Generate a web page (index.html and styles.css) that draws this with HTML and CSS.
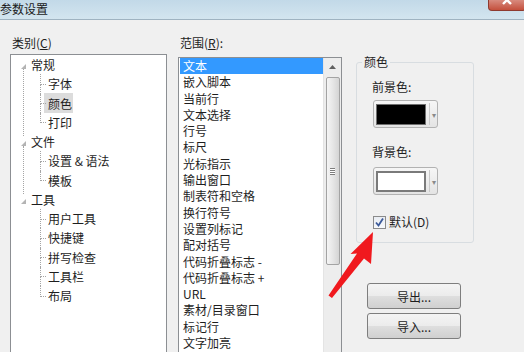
FILE: index.html
```html
<!DOCTYPE html>
<html lang="zh-CN">
<head>
    <meta charset="UTF-8">
    <title>参数设置</title>
    <link rel="stylesheet" href="styles.css">
</head>
<body>
    <div class="titlebar">
        <span class="title">参数设置</span>
        <div class="close-btn">
            <svg width="14" height="8" viewBox="0 0 14 8"><path d="M3 -4 L11 4 M11 -4 L3 4" stroke="#fff" stroke-width="2.4"/></svg>
        </div>
    </div>

    <div class="main">
        <!-- 类别 -->
        <div class="col col-left">
            <div class="label">类别(<u>C</u>)</div>
            <ul class="tree">
                <li class="node">
                    <div class="row root"><span class="twisty"></span>常规</div>
                    <ul class="children">
                        <li class="row child">字体</li>
                        <li class="row child"><span class="sel">颜色</span></li>
                        <li class="row child">打印</li>
                    </ul>
                </li>
                <li class="node">
                    <div class="row root"><span class="twisty"></span>文件</div>
                    <ul class="children">
                        <li class="row child">设置 &amp; 语法</li>
                        <li class="row child">模板</li>
                    </ul>
                </li>
                <li class="node">
                    <div class="row root"><span class="twisty"></span>工具</div>
                    <ul class="children">
                        <li class="row child">用户工具</li>
                        <li class="row child">快捷键</li>
                        <li class="row child">拼写检查</li>
                        <li class="row child">工具栏</li>
                        <li class="row child">布局</li>
                    </ul>
                </li>
            </ul>
        </div>

        <!-- 范围 -->
        <div class="col col-mid">
            <div class="label">范围(<u>R</u>):</div>
            <div class="listbox">
                <ul class="items">
                    <li class="item selected">文本</li>
                    <li class="item">嵌入脚本</li>
                    <li class="item">当前行</li>
                    <li class="item">文本选择</li>
                    <li class="item">行号</li>
                    <li class="item">标尺</li>
                    <li class="item">光标指示</li>
                    <li class="item">输出窗口</li>
                    <li class="item">制表符和空格</li>
                    <li class="item">换行符号</li>
                    <li class="item">设置列标记</li>
                    <li class="item">配对括号</li>
                    <li class="item">代码折叠标志 -</li>
                    <li class="item">代码折叠标志 +</li>
                    <li class="item">URL</li>
                    <li class="item">素材/目录窗口</li>
                    <li class="item">标记行</li>
                    <li class="item">文字加亮</li>
                </ul>
                <div class="scrollbar">
                    <div class="sb-arrow">
                        <svg width="7" height="4" viewBox="0 0 7 4"><path d="M0 4 L3.5 0 L7 4 Z" fill="#606060"/></svg>
                    </div>
                    <div class="sb-thumb"><span class="grip"></span></div>
                </div>
            </div>
        </div>

        <!-- 颜色 -->
        <div class="col col-right">
            <div class="group">
                <div class="group-title">颜色</div>
                <div class="field-label">前景色:</div>
                <div class="color-btn">
                    <span class="swatch black"></span>
                    <span class="sep"></span>
                    <span class="drop">&#9662;</span>
                </div>
                <div class="field-label second">背景色:</div>
                <div class="color-btn bg">
                    <span class="swatch white"></span>
                    <span class="sep"></span>
                    <span class="drop">&#9662;</span>
                </div>
                <div class="check-row">
                    <span class="checkbox">
                        <svg width="11" height="11" viewBox="0 0 11 11"><path d="M2 5.5 L4.5 8.5 L9 1.5" fill="none" stroke="#3c5a9a" stroke-width="1.8"/></svg>
                    </span>
                    默认(D)
                </div>
            </div>
            <button class="btn first">导出...</button>
            <button class="btn">导入...</button>
        </div>
    </div>

    <!-- annotation arrow -->
    <svg class="arrow" width="524" height="352" viewBox="0 0 524 352">
        <polygon points="373,232 371,264 364,258.5 332,298 328.5,295.5 357,253.5 350.5,254" fill="#f0191e"/>
    </svg>
</body>
</html>
```

FILE: styles.css
```css
body {
    margin: 0;
    width: 524px;
    height: 352px;
    overflow: hidden;
    position: relative;
    background-color: #f0f0f0;
    color: #1e1e1e;
    font-family: "Noto Sans CJK SC", "Liberation Sans", sans-serif;
    font-size: 12px;
}
ul {
    list-style: none;
    margin: 0;
    padding: 0;
}
u {
    text-decoration: underline;
}
.titlebar {
    height: 19px;
    border-bottom: 1px solid #9fb3c1;
    background: linear-gradient(#c2d9e8, #d3e5ef);
    display: flex;
    justify-content: space-between;
    align-items: flex-start;
}
.title {
    line-height: 18px;
    color: #1a1a1a;
}
.close-btn {
    width: 36px;
    height: 10px;
    margin-right: -2px;
    background: linear-gradient(#d88a7e, #c4503d);
    border: 1px solid #8e3a2f;
    border-top: none;
    border-radius: 0 0 4px 4px;
    display: flex;
    justify-content: center;
}
.main {
    display: flex;
    padding: 14px 0 0 10px;
    height: 318px;
}
.col {
    display: flex;
    flex-direction: column;
}
.label {
    height: 18px;
    line-height: 18px;
    margin-left: 2px;
}
.col-left {
    width: 157px;
}
.col-left .label {
    margin-bottom: 2px;
}
.tree {
    flex: 1;
    background: #fff;
    border: 1px solid #8c8f93;
    border-bottom: none;
}
.node {
    position: relative;
}
.node:not(:last-child)::after {
    content: '';
    position: absolute;
    left: 12px;
    top: 14px;
    bottom: -4px;
    border-left: 1px dotted #a5a5a5;
}
.row {
    height: 19.25px;
    line-height: 19.25px;
}
.root {
    display: flex;
    align-items: center;
}
.twisty {
    width: 0;
    height: 0;
    margin: 4px 5px 0 10px;
    border-left: 5px solid transparent;
    border-bottom: 5px solid #b4b4b4;
}
.child {
    position: relative;
    padding-left: 37px;
}
.child::before {
    content: '';
    position: absolute;
    left: 29px;
    top: 0;
    width: 5px;
    height: 50%;
    border-left: 1px dotted #a5a5a5;
    border-bottom: 1px dotted #a5a5a5;
}
.child:not(:last-child)::after {
    content: '';
    position: absolute;
    left: 29px;
    top: 50%;
    bottom: 0;
    border-left: 1px dotted #a5a5a5;
}
.sel {
    background: #dcdcdc;
    padding: 2px 1px 1px 4px;
    margin-left: -4px;
}
.col-mid {
    width: 164px;
    margin-left: 11px;
}
.col-mid .label {
    margin-bottom: 5px;
}
.listbox {
    flex: 1;
    display: flex;
    background: #fff;
    border: 1px solid #8c8f93;
    border-bottom: none;
}
.items {
    flex: 1;
    padding: 0 0 0 1px;
}
.item {
    height: 16.3px;
    line-height: 16.3px;
    padding-left: 3px;
    white-space: nowrap;
}
.item.selected {
    background: #3399ff;
    color: #fff;
}
.scrollbar {
    width: 17px;
    background: #ededed;
    border-left: 1px solid #e4e4e4;
    display: flex;
    flex-direction: column;
    align-items: center;
}
.sb-arrow {
    height: 18px;
    display: flex;
    align-items: center;
    justify-content: center;
}
.sb-thumb {
    width: 12px;
    height: 186px;
    margin-top: 1px;
    border: 1px solid #a3a3a3;
    border-radius: 2px;
    background: linear-gradient(to right, #f5f5f5, #e2e2e2 60%, #d4d4d4);
    display: flex;
    align-items: center;
    justify-content: center;
}
.grip {
    width: 5px;
    height: 7px;
    box-sizing: border-box;
    border-top: 1px solid #7d7d7d;
    border-bottom: 1px solid #7d7d7d;
    background: linear-gradient(#fff 0 1px, #7d7d7d 1px 2px, #fff 2px 3px, #7d7d7d 3px 4px, #fff 4px);
}
.col-right {
    width: 118px;
    margin-left: 14px;
}
.group {
    margin-top: 28px;
    height: 179px;
    border: 1px solid #d8dde1;
    border-radius: 3px;
    padding-left: 15px;
}
.group-title {
    width: max-content;
    margin: -9px 0 0 -10px;
    padding: 0 2px;
    line-height: 16px;
    background: #f0f0f0;
}
.field-label {
    line-height: 16px;
    margin-top: 9px;
}
.field-label.second {
    margin-top: 16px;
}
.color-btn {
    width: 65px;
    height: 28px;
    margin: 5px 0 0 1px;
    box-sizing: border-box;
    border: 1px solid #b2b2b2;
    border-radius: 3px;
    background: linear-gradient(#f6f6f6, #e4e4e4);
    display: flex;
    align-items: center;
    padding-left: 2px;
}
.color-btn.bg {
    margin-top: 7px;
}
.swatch {
    width: 50px;
    height: 21px;
    box-sizing: border-box;
    border: 1px solid #6f6f6f;
}
.swatch.black {
    background: #000;
}
.swatch.white {
    background: #fff;
    border: 2px solid #7a7a7a;
}
.sep {
    width: 1px;
    height: 22px;
    margin-left: 3px;
    background: #c9c9c9;
}
.drop {
    font-size: 8px;
    color: #8a8a8a;
    margin-left: 2px;
}
.check-row {
    display: flex;
    align-items: center;
    gap: 3px;
    margin: 19px 0 0 1px;
    line-height: 16px;
}
.checkbox {
    width: 13px;
    height: 13px;
    box-sizing: border-box;
    border: 1px solid #8b8b8b;
    background: linear-gradient(#e9edf3, #f8f9fb);
    display: flex;
    align-items: center;
    justify-content: center;
}
.btn {
    width: 94px;
    height: 26px;
    margin: 40px 0 0 11px;
    border: 1px solid #7e7e7e;
    border-radius: 3px;
    background: linear-gradient(#f4f4f4 0, #ececec 48%, #dedede 52%, #d0d0d0 100%);
    font-family: inherit;
    font-size: 12px;
    color: #1e1e1e;
    padding: 0;
}
.btn + .btn {
    margin-top: 4px;
}
.arrow {
    position: absolute;
    left: 0;
    top: 0;
    pointer-events: none;
}
```
